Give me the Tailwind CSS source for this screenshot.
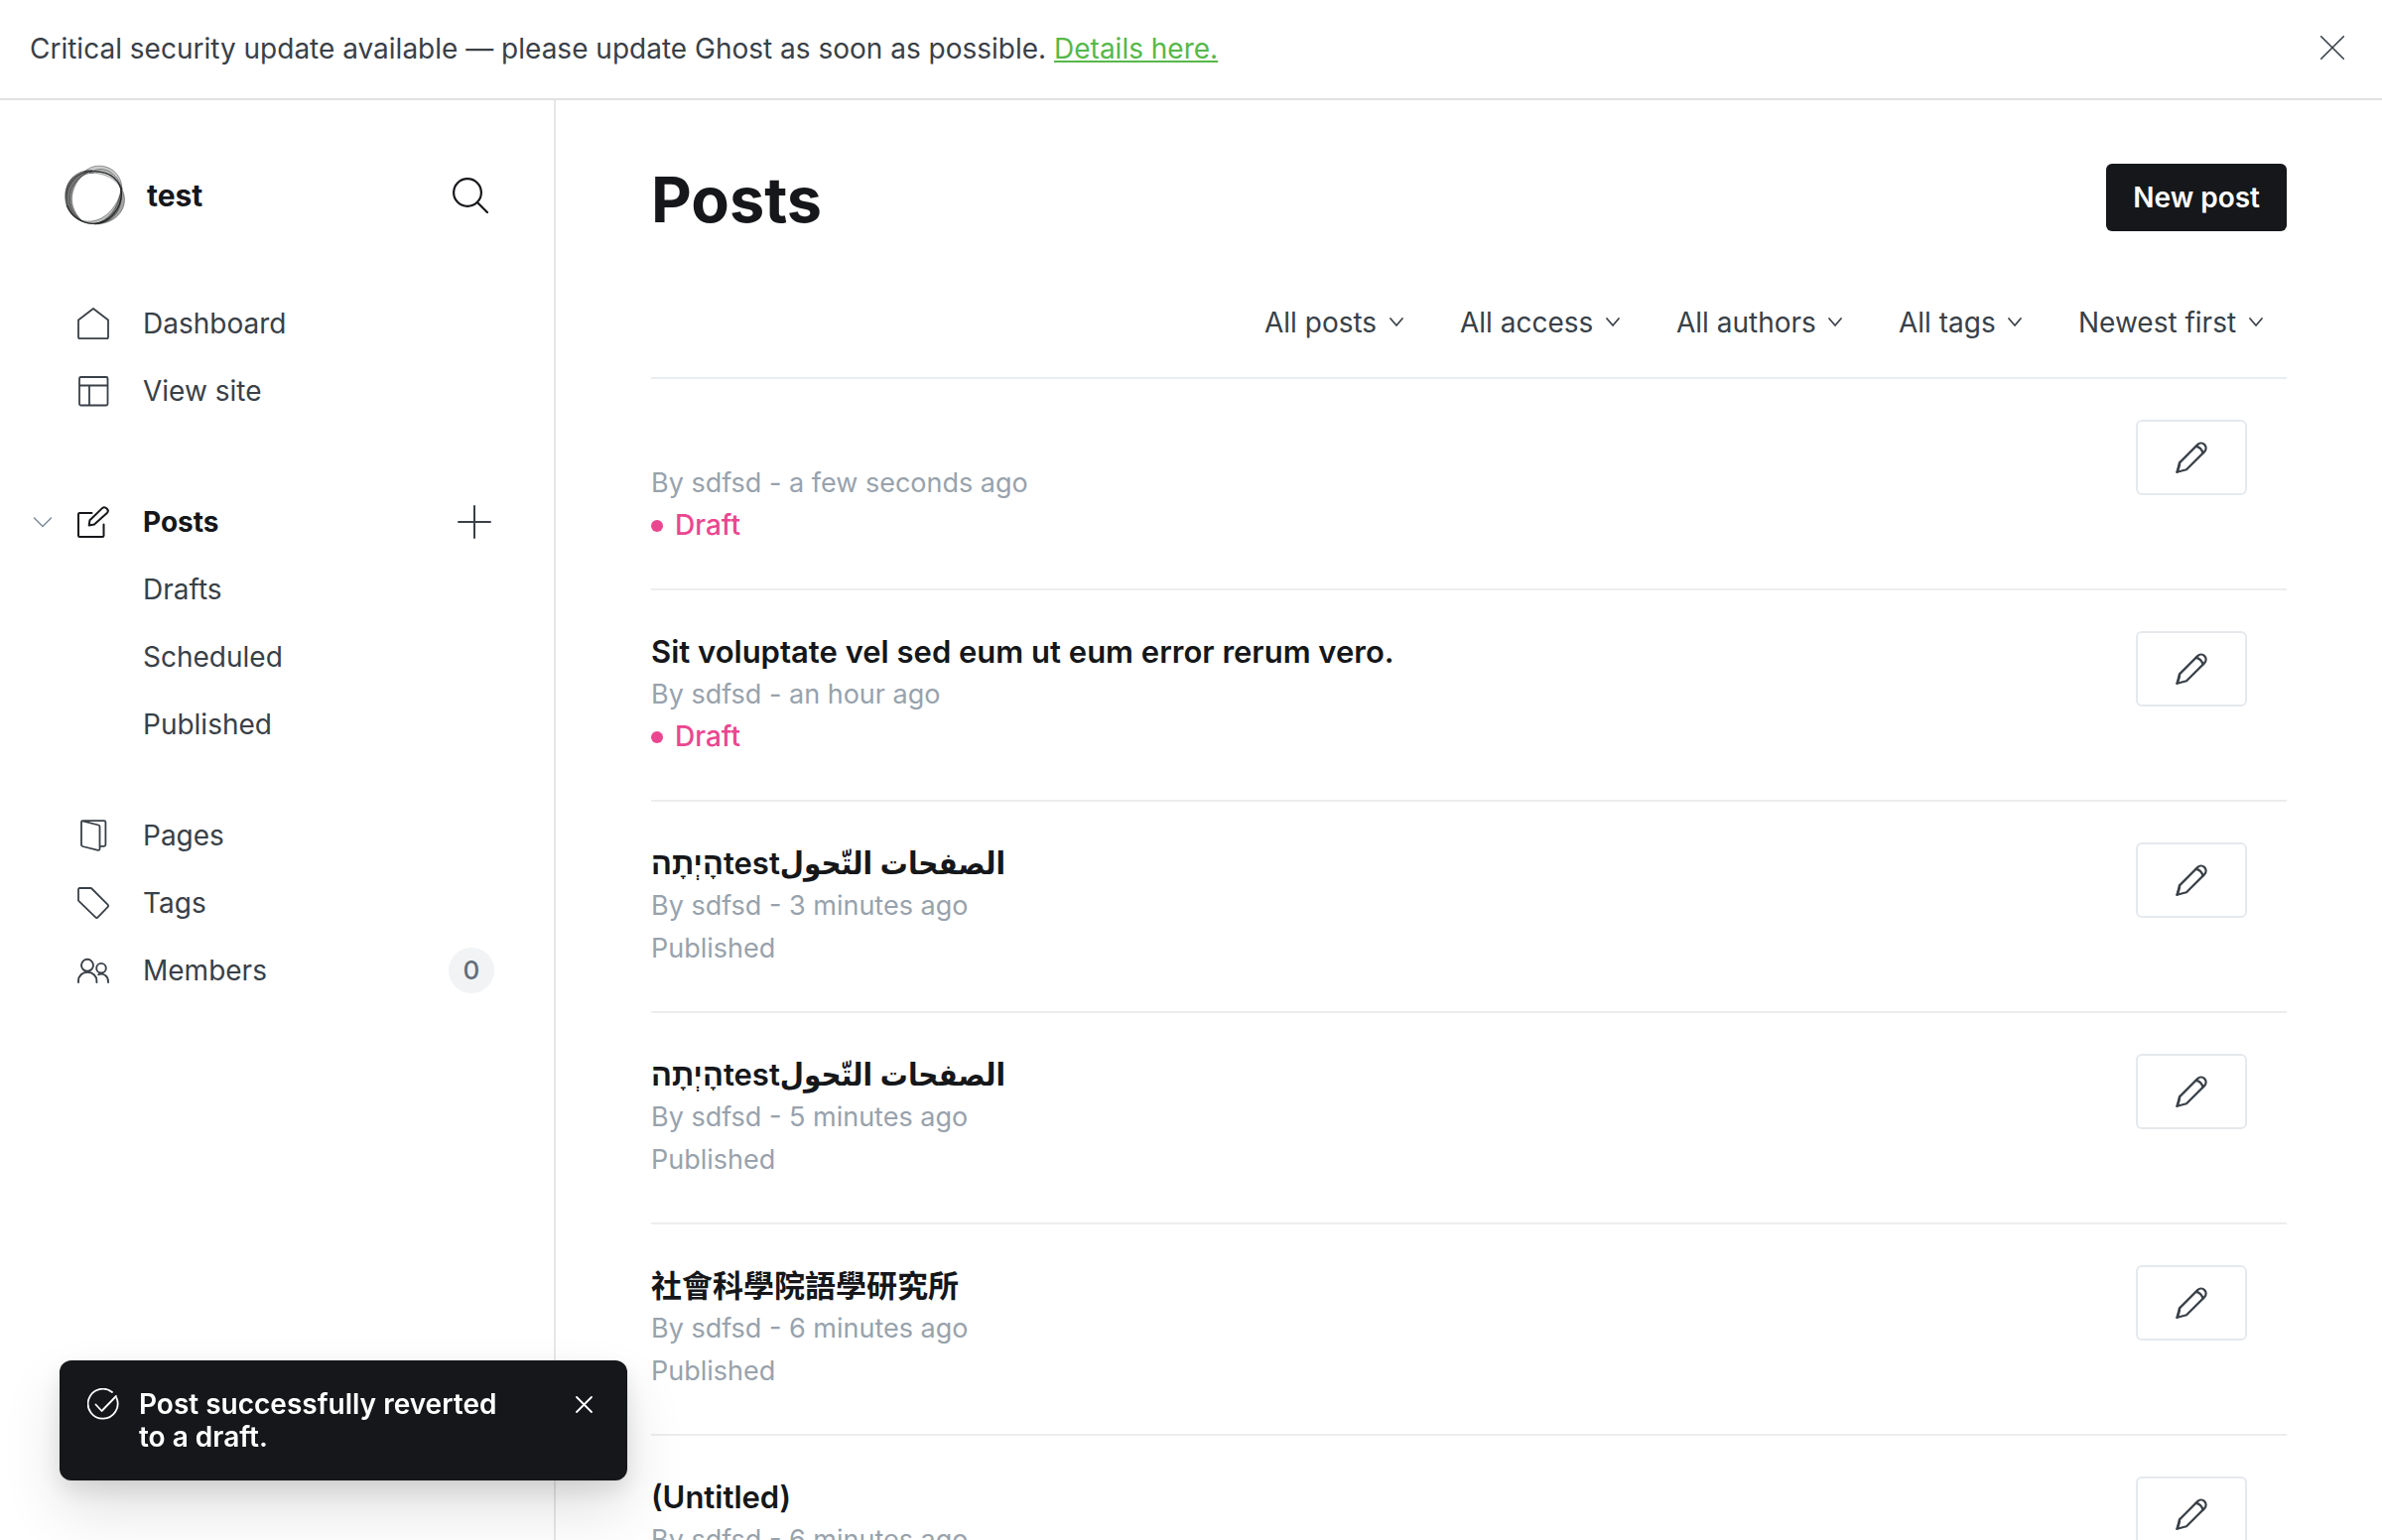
<!DOCTYPE html>
<html lang="en">
<head>
<meta charset="utf-8">
<title>Posts</title>
<script src="https://cdn.jsdelivr.net/npm/@tailwindcss/browser@4"></script>
</head>
<body class="flex h-screen flex-col overflow-hidden bg-white font-['Inter','Liberation_Sans','DejaVu_Sans_Condensed','DejaVu_Sans','Noto_Sans_CJK_TC',sans-serif] text-[28px] leading-10 text-[#394047] antialiased">

<svg class="hidden" aria-hidden="true">
  <symbol id="chevron" viewBox="0 0 14 10"><path d="M1 1l6 7 6-7" fill="none" stroke="currentColor" stroke-width="1.7" stroke-linecap="round" stroke-linejoin="round"/></symbol>
  <symbol id="pencil" viewBox="0 0 32 32"><g fill="none" stroke="currentColor" stroke-width="2.200" stroke-linecap="round" stroke-linejoin="round"><path d="M11 28.300L1.500 30.800 4 21.400 22.200 3.100a4.900 4.900 0 0 1 7 7z"/><path d="M4 21.400c.3 2-.5 5-2.500 9.400M20.500 4.800c3.600.5 6.200 3.200 7 7"/></g></symbol>
</svg>

<aside class="flex shrink-0 items-center justify-between border-b-2 border-[#e1e1e1] px-[30px]">
  <p class="py-[29px] leading-[41px]">Critical security update available — please update Ghost as soon as possible. <a href="#" class="text-[#56b849] underline decoration-2 underline-offset-2">Details here.</a></p>
  <button type="button" aria-label="Close" class="px-2 pt-1.5 pb-2.5">
    <svg class="size-6" viewBox="0 0 24 24" fill="none" stroke="currentColor" stroke-width="1.600" stroke-linecap="round"><path d="M.7.7l22.600 22.600M23.300.7L.7 23.300"/></svg>
  </button>
</aside>

<div class="flex min-h-0 flex-1">
  <nav class="w-[560px] shrink-0 border-r-2 border-[#e5e7e8] pt-[65px]">
    <div class="flex items-center pr-[66px] pl-16">
      <svg class="size-[62px]" viewBox="42 48 186 186" stroke="#15171a" stroke-width="2" stroke-opacity=".6" fill="#000">
        <path fill-opacity=".2" d="M104 70C120 55 138 50 158 52 192 56 218 82 219 122 208 92 178 68 130 68z"/>
        <path fill-opacity=".1" d="M120 72C140 60 160 58 180 68 200 80 212 96 219 122 200 92 170 72 120 72z"/>
        <path fill-opacity=".4" d="M130 65C95 62 56 84 50 124 46 160 60 200 98 218 70 190 62 160 70 130 78 98 100 74 130 65z"/>
        <path fill-opacity=".25" d="M134 72C100 72 68 100 62 140 58 172 72 200 100 220 60 206 44 170 47 134 54 90 90 66 134 72z"/>
        <path fill-opacity=".35" d="M216 118C228 138 230 162 220 182 206 212 172 228 136 228 176 216 208 186 216 118z"/>
        <path fill-opacity=".25" d="M218 124C220 160 212 198 176 218 150 230 118 230 94 216 150 232 200 190 218 124z"/>
        <path fill="none" stroke-width="4" stroke-opacity=".85" d="M52 170C66 206 98 226 132 226 182 226 217 180 217 134 216 98 186 68 134 68"/>
        <path fill="none" stroke-width="3" d="M134 68C84 64 42 108 52 170"/>
      </svg>
      <span class="ml-[22px] flex-1 text-[30px] font-bold text-[#15171a]">test</span>
      <button type="button" aria-label="Search" class="text-[#15171a]">
        <svg class="size-9" viewBox="0 0 36 36" fill="none" stroke="currentColor" stroke-width="2.200" stroke-linecap="round"><circle cx="15" cy="15" r="13.900"/><path d="M25 25l10 10"/></svg>
      </button>
    </div>

    <ul class="mt-16">
      <li><a href="#" class="flex h-[68px] items-center pl-[78px]">
        <svg class="size-8" viewBox="0 0 32 32" fill="none" stroke="currentColor" stroke-width="1.800" stroke-linecap="round" stroke-linejoin="round"><path d="M16 1L1 12.500V30a1.200 1.200 0 0 0 1.200 1.200h27.600A1.200 1.200 0 0 0 31 30V12.500z"/></svg>
        <span class="ml-[34px]">Dashboard</span></a></li>
      <li><a href="#" class="flex h-[68px] items-center pl-[78px]">
        <svg class="size-8" viewBox="0 0 32 32" fill="none" stroke="currentColor" stroke-width="1.800" stroke-linejoin="round"><rect x="2" y="2" width="28.500" height="28.500" rx="1.500"/><path d="M2 10.500h28.500M12 10.500v20"/></svg>
        <span class="ml-[34px]">View site</span></a></li>
    </ul>

    <div class="mt-16 flex h-[68px] items-center pr-[63px] pl-[33px]">
      <button type="button" aria-label="Collapse posts" class="text-[#7c8b9a]"><svg class="h-[11px] w-5" viewBox="0 0 20 11" fill="none" stroke="currentColor" stroke-width="1.500" stroke-linecap="round" stroke-linejoin="round"><path d="M1.500 1L10 9.500 18.500 1"/></svg></button>
      <a href="#" class="ml-[25px] flex flex-1 items-center font-bold text-[#15171a]">
        <svg class="size-8" viewBox="0 0 32 32" fill="none" stroke="currentColor" stroke-width="2" stroke-linecap="round" stroke-linejoin="round"><path d="M14.500 7H2.200A1.200 1.200 0 0 0 1 8.200v21.600A1.200 1.200 0 0 0 2.200 31h23.100a1.200 1.200 0 0 0 1.200-1.200V18.500"/><path d="M17 18.500l-5.300 1 .8-5.300L25.300 1.900c2.500-2.200 7.200 2 4.800 4.800z"/></svg>
        <span class="ml-[34px]">Posts</span></a>
      <button type="button" aria-label="New post"><svg class="size-[34px]" viewBox="0 0 34 34" fill="none" stroke="currentColor" stroke-width="2" stroke-linecap="round"><path d="M17 1v32M1 17h32"/></svg></button>
    </div>
    <ul>
      <li><a href="#" class="flex h-[68px] items-center pl-36">Drafts</a></li>
      <li><a href="#" class="flex h-[68px] items-center pl-36">Scheduled</a></li>
      <li><a href="#" class="flex h-[68px] items-center pl-36">Published</a></li>
    </ul>

    <ul class="mt-11">
      <li><a href="#" class="flex h-[68px] items-center pl-[78px]">
        <svg class="size-8" viewBox="0 0 32 32" fill="none" stroke="currentColor" stroke-width="1.800" stroke-linecap="round" stroke-linejoin="round"><path d="M5.200 1.300l16 4.200c.8.200 1.300.8 1.300 1.600v22.400c0 1-.8 1.600-1.700 1.300L5.300 27c-.8-.2-1.300-.8-1.300-1.600V2.500C4 1.700 4.500 1.200 5.200 1.200h21.600c.9 0 1.600.6 1.600 1.500v22.600c0 .9-.7 1.500-1.600 1.500h-4.100"/></svg>
        <span class="ml-[34px]">Pages</span></a></li>
      <li><a href="#" class="flex h-[68px] items-center pl-[78px]">
        <svg class="size-8" viewBox="0 0 32 32" fill="none" stroke="currentColor" stroke-width="1.800" stroke-linecap="round" stroke-linejoin="round"><path d="M2.200 1h11c.5 0 .9.200 1.200.5l16.100 16.200a1.700 1.700 0 0 1 0 2.400L20.600 30.400a1.700 1.700 0 0 1-2.400 0L1.500 14.200c-.3-.3-.5-.7-.5-1.200V2.200A1.200 1.200 0 0 1 2.200 1z"/></svg>
        <span class="ml-[34px]">Tags</span></a></li>
      <li><a href="#" class="flex h-[68px] items-center pr-[60px] pl-[78px]">
        <svg class="size-8" viewBox="0 0 32 32" fill="none" stroke="currentColor" stroke-width="1.900" stroke-linecap="round" stroke-linejoin="round"><circle cx="10" cy="10.800" r="6"/><path d="M1 28v-1.500c0-5 4-8.800 9.200-8.800s9.200 3.800 9.200 8.800V28"/><circle cx="24" cy="13.700" r="4.800"/><path d="M21.200 20.200c5.500-2 9.800 2 9.800 6.800v1"/></svg>
        <span class="ml-[34px] flex-1">Members</span>
        <span class="flex size-[46px] items-center justify-center rounded-full bg-[#f1f3f4] text-[26px] font-medium text-[#626d79]">0</span></a></li>
    </ul>
  </nav>

  <main class="min-w-0 flex-1 overflow-hidden px-24 pt-16">
    <header class="flex items-start justify-between">
      <h1 class="text-[63px] leading-[72px] font-bold text-[#15171a]">Posts</h1>
      <a href="#" class="flex h-[68px] items-center rounded-md bg-[#15171a] px-[27px] font-semibold text-white">New post</a>
    </header>

    <form class="mt-[68px] flex justify-end gap-[57px] pr-6 pb-[35px]">
      <label class="flex items-center gap-3"><select aria-label="Type" class="appearance-none"><option>All posts</option></select><svg class="h-2.5 w-3.5"><use href="#chevron"/></svg></label>
      <label class="flex items-center gap-3"><select aria-label="Access" class="appearance-none"><option>All access</option></select><svg class="h-2.5 w-3.5"><use href="#chevron"/></svg></label>
      <label class="flex items-center gap-3"><select aria-label="Author" class="appearance-none"><option>All authors</option></select><svg class="h-2.5 w-3.5"><use href="#chevron"/></svg></label>
      <label class="flex items-center gap-3"><select aria-label="Tag" class="appearance-none"><option>All tags</option></select><svg class="h-2.5 w-3.5"><use href="#chevron"/></svg></label>
      <label class="flex items-center gap-3"><select aria-label="Order" class="appearance-none"><option>Newest first</option></select><svg class="h-2.5 w-3.5"><use href="#chevron"/></svg></label>
    </form>

    <ol>
      <li class="flex items-start justify-between border-t-2 border-[#e9edf0] pt-10 pr-10 pb-[42px]">
        <div>
          <h2 class="h-[43px] text-[31px] leading-[43px] font-semibold text-[#15171a]"></h2>
          <p class="text-[27px] leading-[43px] text-[#98a2ac]">By sdfsd - a few seconds ago</p>
          <p class="flex items-center gap-3 leading-[43px] font-medium text-[#eb4690]"><span class="size-3 rounded-full bg-current"></span>Draft</p>
        </div>
        <a href="#" aria-label="Edit" class="mt-px flex h-[76px] w-28 items-center justify-center rounded-md border-2 border-[#e5e9ed]"><svg class="size-8"><use href="#pencil"/></svg></a>
      </li>
      <li class="flex items-start justify-between border-t-2 border-[#ecedee] pt-10 pr-10 pb-[42px]">
        <div>
          <h2 class="h-[43px] text-[31px] leading-[43px] font-semibold text-[#15171a]">Sit voluptate vel sed eum ut eum error rerum vero.</h2>
          <p class="text-[27px] leading-[43px] text-[#98a2ac]">By sdfsd - an hour ago</p>
          <p class="flex items-center gap-3 leading-[43px] font-medium text-[#eb4690]"><span class="size-3 rounded-full bg-current"></span>Draft</p>
        </div>
        <a href="#" aria-label="Edit" class="mt-px flex h-[76px] w-28 items-center justify-center rounded-md border-2 border-[#e5e9ed]"><svg class="size-8"><use href="#pencil"/></svg></a>
      </li>
      <li class="flex items-start justify-between border-t-2 border-[#ecedee] pt-10 pr-10 pb-[42px]">
        <div>
          <h2 class="h-[43px] text-[31px] leading-[43px] font-semibold text-[#15171a]">הָיְתָהtestالصفحات التّحول</h2>
          <p class="text-[27px] leading-[43px] text-[#98a2ac]">By sdfsd - 3 minutes ago</p>
          <p class="text-[27px] leading-[43px] text-[#98a2ac]">Published</p>
        </div>
        <a href="#" aria-label="Edit" class="mt-px flex h-[76px] w-28 items-center justify-center rounded-md border-2 border-[#e5e9ed]"><svg class="size-8"><use href="#pencil"/></svg></a>
      </li>
      <li class="flex items-start justify-between border-t-2 border-[#ecedee] pt-10 pr-10 pb-[42px]">
        <div>
          <h2 class="h-[43px] text-[31px] leading-[43px] font-semibold text-[#15171a]">הָיְתָהtestالصفحات التّحول</h2>
          <p class="text-[27px] leading-[43px] text-[#98a2ac]">By sdfsd - 5 minutes ago</p>
          <p class="text-[27px] leading-[43px] text-[#98a2ac]">Published</p>
        </div>
        <a href="#" aria-label="Edit" class="mt-px flex h-[76px] w-28 items-center justify-center rounded-md border-2 border-[#e5e9ed]"><svg class="size-8"><use href="#pencil"/></svg></a>
      </li>
      <li class="flex items-start justify-between border-t-2 border-[#ecedee] pt-10 pr-10 pb-[42px]">
        <div>
          <h2 lang="zh-Hant" class="h-[43px] text-[31px] leading-[43px] font-semibold text-[#15171a]">社會科學院語學研究所</h2>
          <p class="text-[27px] leading-[43px] text-[#98a2ac]">By sdfsd - 6 minutes ago</p>
          <p class="text-[27px] leading-[43px] text-[#98a2ac]">Published</p>
        </div>
        <a href="#" aria-label="Edit" class="mt-px flex h-[76px] w-28 items-center justify-center rounded-md border-2 border-[#e5e9ed]"><svg class="size-8"><use href="#pencil"/></svg></a>
      </li>
      <li class="flex items-start justify-between border-t-2 border-[#ecedee] pt-10 pr-10 pb-[42px]">
        <div>
          <h2 class="h-[43px] text-[31px] leading-[43px] font-semibold text-[#15171a]">(Untitled)</h2>
          <p class="text-[27px] leading-[43px] text-[#98a2ac]">By sdfsd - 6 minutes ago</p>
        </div>
        <a href="#" aria-label="Edit" class="mt-px flex h-[76px] w-28 items-center justify-center rounded-md border-2 border-[#e5e9ed]"><svg class="size-8"><use href="#pencil"/></svg></a>
      </li>
    </ol>
  </main>
</div>

<div role="status" class="fixed bottom-[60px] left-[60px] flex w-[572px] items-start rounded-xl bg-[#15171a] px-7 pt-7 pb-[27px] leading-[33px] font-semibold text-white shadow-[0_0_2px_rgba(0,0,0,0.1),0_30px_60px_rgba(0,0,0,0.12),0_10px_24px_rgba(0,0,0,0.1)]">
  <svg class="size-8 shrink-0" viewBox="0 0 32 32" fill="none" stroke="currentColor" stroke-width="1.800" stroke-linecap="round" stroke-linejoin="round"><path d="M29.500 10A15 15 0 1 1 25 4"/><path d="M8.500 16.500l6 6.500L29 8"/></svg>
  <p class="ml-5 flex-1 pr-[72px]">Post successfully reverted to a draft.</p>
  <button type="button" aria-label="Dismiss" class="mt-2 mr-[7px]"><svg class="size-[17px]" viewBox="0 0 17 17" fill="none" stroke="currentColor" stroke-width="1.800" stroke-linecap="round"><path d="M1 1l15 15M16 1L1 16"/></svg></button>
</div>
</body>
</html>
